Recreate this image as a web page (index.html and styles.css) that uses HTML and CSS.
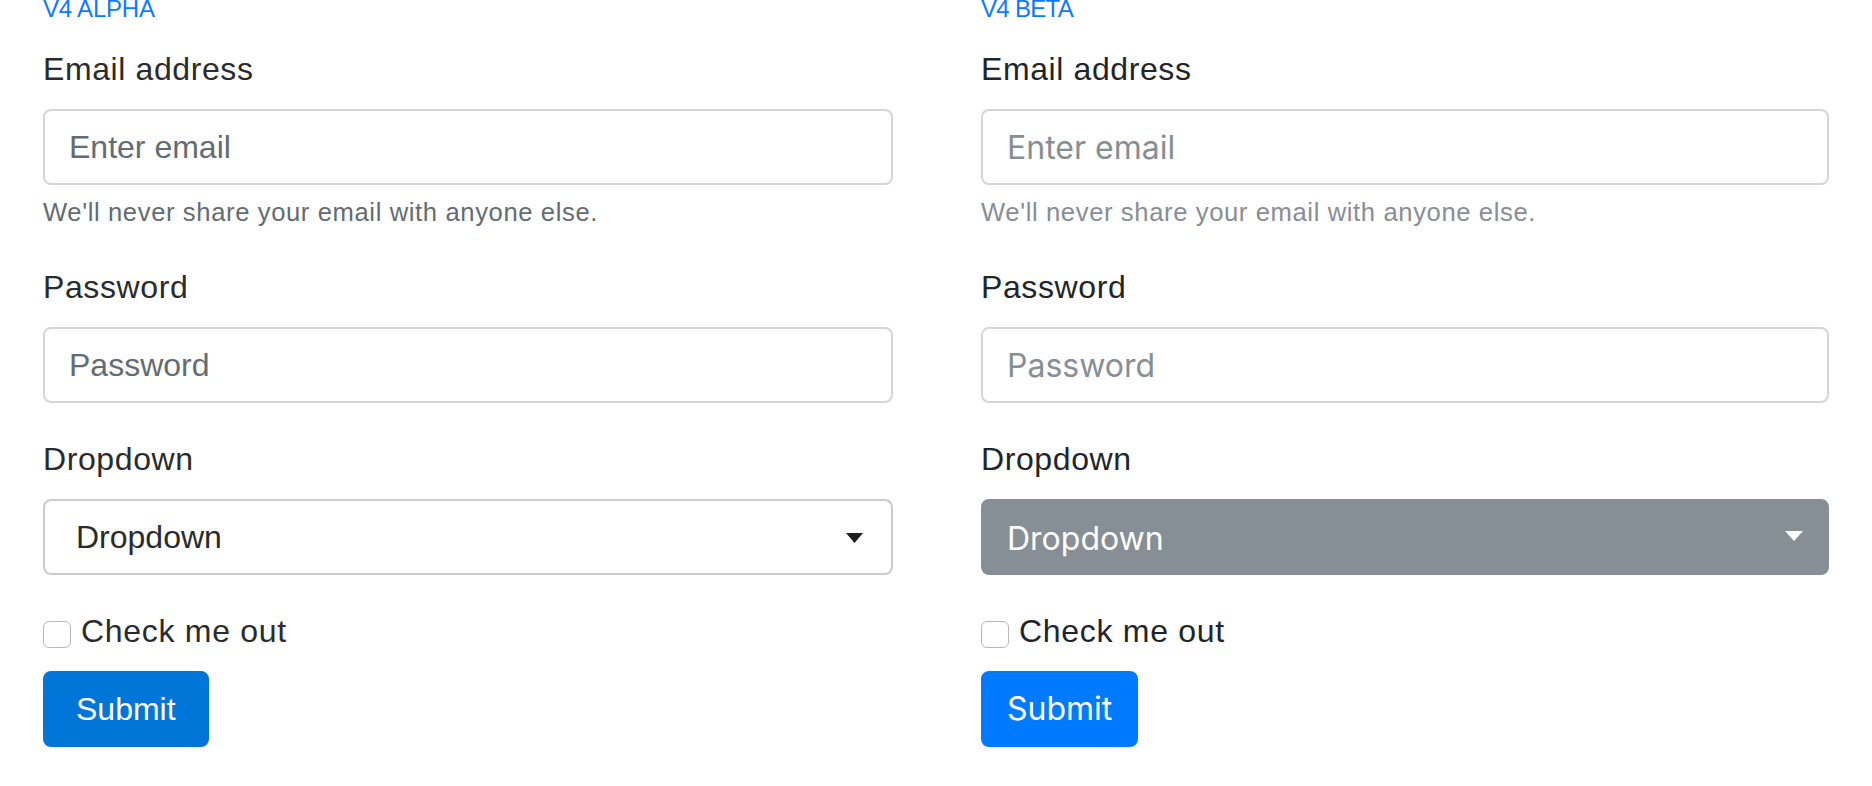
FILE: index.html
```html
<!DOCTYPE html>
<html lang="en">
<head>
<meta charset="utf-8">
<title>Bootstrap v4 alpha vs beta forms</title>
<link rel="stylesheet" href="styles.css">
</head>
<body>
<div class="page">
  <section class="col alpha">
    <div class="version">V4 Alpha</div>
    <form class="form">
      <div class="group">
        <label class="label" for="a-email">Email address</label>
        <input class="field" id="a-email" type="email" placeholder="Enter email">
        <small class="help">We'll never share your email with anyone else.</small>
      </div>
      <div class="group">
        <label class="label" for="a-pass">Password</label>
        <input class="field" id="a-pass" type="password" placeholder="Password">
      </div>
      <div class="group">
        <label class="label" for="a-select">Dropdown</label>
        <div class="select-wrap">
          <select class="select" id="a-select"><option>Dropdown</option></select>
          <svg class="caret" viewBox="0 0 17 10" width="17" height="10"><path d="M0 0H17L8.5 10Z" fill="currentColor"/></svg>
        </div>
      </div>
      <label class="check"><input class="box" type="checkbox"><span>Check me out</span></label>
      <button class="btn" type="button">Submit</button>
    </form>
  </section>
  <section class="col beta">
    <div class="version">V4 Beta</div>
    <form class="form">
      <div class="group">
        <label class="label" for="b-email">Email address</label>
        <input class="field" id="b-email" type="email" placeholder="Enter email">
        <small class="help">We'll never share your email with anyone else.</small>
      </div>
      <div class="group">
        <label class="label" for="b-pass">Password</label>
        <input class="field" id="b-pass" type="password" placeholder="Password">
      </div>
      <div class="group">
        <label class="label" for="b-select">Dropdown</label>
        <div class="select-wrap">
          <select class="select" id="b-select"><option>Dropdown</option></select>
          <svg class="caret" viewBox="0 0 18 10" width="18" height="10"><path d="M0 0H18L9 10Z" fill="currentColor"/></svg>
        </div>
      </div>
      <label class="check"><input class="box" type="checkbox"><span>Check me out</span></label>
      <button class="btn" type="button">Submit</button>
    </form>
  </section>
</div>
</body>
</html>
```
FILE: styles.css
```css
html, body {
  margin: 0;
  padding: 0;
  background: #fff;
}

body {
  font-family: "Liberation Sans", Arial, Helvetica, sans-serif;
  color: #292b2c;
}

.page {
  display: grid;
  grid-template-columns: 850px 848px;
  column-gap: 88px;
  padding-left: 43px;
}

.version {
  font-size: 24px;
  line-height: 18px;
  color: #0a7bff;
  text-transform: uppercase;
  margin-bottom: 27px;
}

.form {
  margin: 0;
}

.group {
  margin-bottom: 32px;
}

.label {
  display: block;
  font-size: 32px;
  line-height: 48px;
  letter-spacing: 0.6px;
  margin-bottom: 16px;
}

.field {
  display: block;
  box-sizing: border-box;
  width: 100%;
  height: 76px;
  margin: 0;
  padding: 12px 24px;
  font-family: "Liberation Sans", Arial, sans-serif;
  font-size: 32px;
  line-height: 48px;
  color: #464a4c;
  background: #fff;
  border: 2px solid #d6d6d6;
  border-radius: 8px;
  outline: none;
}

.help {
  display: block;
  margin-top: 8px;
  font-size: 25.6px;
  line-height: 38.4px;
  letter-spacing: 0.62px;
}

.select-wrap {
  position: relative;
}

.select {
  display: block;
  box-sizing: border-box;
  width: 100%;
  height: 76px;
  margin: 0;
  padding: 0 60px 0 31px;
  -webkit-appearance: none;
  appearance: none;
  font-family: "Liberation Sans", Arial, sans-serif;
  font-size: 32px;
  border-radius: 8px;
  outline: none;
}

.caret {
  position: absolute;
  display: block;
}

.check {
  display: flex;
  align-items: center;
  height: 48px;
  margin-bottom: 16px;
  font-size: 32px;
  line-height: 48px;
  letter-spacing: 0.7px;
}

.box {
  -webkit-appearance: none;
  appearance: none;
  box-sizing: border-box;
  width: 28px;
  height: 27px;
  margin: 6px 10px 0 0;
  background: #fff;
  border: 1.5px solid #b8b8b8;
  border-radius: 6px;
}

.btn {
  display: block;
  margin: 0;
  font-size: 32px;
  color: #fff;
  border-radius: 8px;
  cursor: pointer;
}

/* ---------- v4 alpha ---------- */
.alpha .version {
  letter-spacing: -0.2px;
}

.alpha .label,
.alpha .check {
  color: #292b2c;
}

.alpha .field::placeholder {
  color: #636c72;
  opacity: 1;
}

.alpha .help {
  color: #636c72;
}

.alpha .select {
  color: #292b2c;
  background: #fff;
  border: 2px solid #cbcbcb;
}

.alpha .caret {
  right: 30px;
  top: 34px;
  color: #1f1f1f;
}

.alpha .btn {
  font-family: "Liberation Sans", Arial, sans-serif;
  line-height: 40px;
  padding: 16px 31px;
  background: #0275d8;
  border: 2px solid #0275d8;
}

/* ---------- v4 beta ---------- */
.beta .version {
  letter-spacing: -0.7px;
}

.beta .label,
.beta .check {
  color: #212529;
}

.beta .field {
  font-family: "Inter", "Liberation Sans", sans-serif;
  border-color: #d4d6d8;
}

.beta .field::placeholder {
  color: #868e96;
  opacity: 1;
}

.beta .help {
  color: #868e96;
}

.beta .select {
  font-family: "Inter", "Liberation Sans", sans-serif;
  padding-left: 24px;
  padding-top: 3px;
  color: #fff;
  background: #868e96;
  border: 2px solid #868e96;
}

.beta .caret {
  right: 26px;
  top: 32px;
  color: #fff;
}

.beta .btn {
  font-family: "Inter", "Liberation Sans", sans-serif;
  line-height: 48px;
  padding: 12px 24px;
  background: #007bff;
  border: 2px solid #007bff;
}
```
